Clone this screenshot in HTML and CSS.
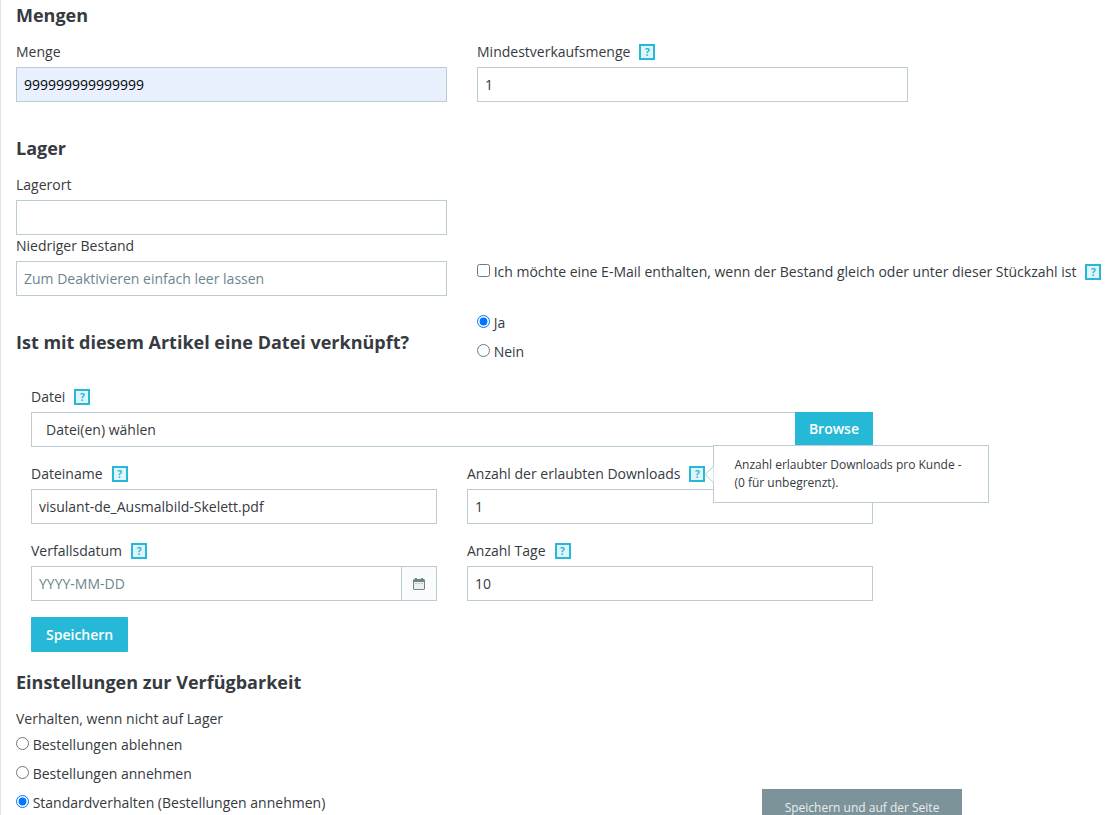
FILE: index.html
```html
<!DOCTYPE html>
<html lang="de">
<head>
  <meta charset="UTF-8" />
  <meta name="viewport" content="width=device-width, initial-scale=1" />
  <title>Mengen</title>
  <link rel="stylesheet" href="styles.css">
</head>
<body>
  <form class="quantities">

    <section class="block">
      <h2>Mengen</h2>
      <div class="row">
        <div class="field">
          <div class="field-head"><label for="qty">Menge</label></div>
          <input class="control autofilled" type="text" id="qty" value="999999999999999">
        </div>
        <div class="field">
          <div class="field-head">
            <label for="minQty">Mindestverkaufsmenge</label>
            <button type="button" class="help" aria-label="Hilfe">?</button>
          </div>
          <input class="control" type="text" id="minQty" value="1">
        </div>
      </div>
    </section>

    <section class="block stock">
      <h2>Lager</h2>
      <div class="row">
        <div class="field">
          <div class="field-head"><label for="location">Lagerort</label></div>
          <input class="control" type="text" id="location">
        </div>
      </div>
      <div class="row">
        <div class="field">
          <div class="field-head"><label for="lowStock">Niedriger Bestand</label></div>
          <input class="control" type="text" id="lowStock" placeholder="Zum Deaktivieren einfach leer lassen">
        </div>
        <div class="alert-choice">
          <label class="choice"><input type="checkbox"> Ich möchte eine E-Mail enthalten, wenn der Bestand gleich oder unter dieser Stückzahl ist</label>
          <button type="button" class="help" aria-label="Hilfe">?</button>
        </div>
      </div>
    </section>

    <section class="block files">
      <div class="row file-question">
        <h2>Ist mit diesem Artikel eine Datei verknüpft?</h2>
        <div class="choices">
          <label class="choice"><input type="radio" name="virtual" checked> Ja</label>
          <label class="choice"><input type="radio" name="virtual"> Nein</label>
        </div>
      </div>

      <div class="file-form">
        <div class="field">
          <div class="field-head">
            <label for="file">Datei</label>
            <button type="button" class="help" aria-label="Hilfe">?</button>
          </div>
          <div class="file-picker">
            <input class="file-input" type="file" id="file">
            <label class="file-label" for="file">
              <span class="file-name">Datei(en) wählen</span>
              <span class="file-browse">Browse</span>
            </label>
          </div>
        </div>

        <div class="row">
          <div class="field">
            <div class="field-head">
              <label for="fileName">Dateiname</label>
              <button type="button" class="help" aria-label="Hilfe">?</button>
            </div>
            <input class="control" type="text" id="fileName" value="visulant-de_Ausmalbild-Skelett.pdf">
          </div>
          <div class="field">
            <div class="field-head">
              <label for="downloads">Anzahl der erlaubten Downloads</label>
              <div class="help-wrap">
                <button type="button" class="help" aria-label="Hilfe" aria-describedby="downloadsTip">?</button>
                <div class="tip" id="downloadsTip" role="tooltip">Anzahl erlaubter Downloads pro Kunde - (0 für unbegrenzt).</div>
              </div>
            </div>
            <input class="control" type="text" id="downloads" value="1">
          </div>
        </div>

        <div class="row">
          <div class="field">
            <div class="field-head">
              <label for="expires">Verfallsdatum</label>
              <button type="button" class="help" aria-label="Hilfe">?</button>
            </div>
            <div class="date-group">
              <input class="control" type="text" id="expires" placeholder="YYYY-MM-DD">
              <button type="button" class="date-button" aria-label="Datum wählen">
                <svg width="12" height="12" viewBox="0 0 12 12">
                  <path fill="#6c868e" d="M2 0h2v1h4V0h2v1h1l1 1v9l-1 1H1l-1-1V2l1-1h1z"/>
                  <path fill="#eef0ef" d="M1 4h10v7H1z"/>
                  <path fill="#b9c3c4" d="M2 5h2v1H2zM5 5h2v1H5zM8 5h2v1H8z"/>
                </svg>
              </button>
            </div>
          </div>
          <div class="field">
            <div class="field-head">
              <label for="days">Anzahl Tage</label>
              <button type="button" class="help" aria-label="Hilfe">?</button>
            </div>
            <input class="control" type="text" id="days" value="10">
          </div>
        </div>

        <button type="button" class="btn-primary">Speichern</button>
      </div>
    </section>

    <section class="block">
      <h2>Einstellungen zur Verfügbarkeit</h2>
      <div class="field-head">Verhalten, wenn nicht auf Lager</div>
      <div class="choices">
        <label class="choice"><input type="radio" name="outOfStock"> Bestellungen ablehnen</label>
        <label class="choice"><input type="radio" name="outOfStock"> Bestellungen annehmen</label>
        <div class="last-line">
          <label class="choice"><input type="radio" name="outOfStock" checked> Standardverhalten (Bestellungen annehmen)</label>
          <button type="button" class="btn-stay">Speichern und auf der Seite bleiben</button>
        </div>
      </div>
    </section>

  </form>
</body>
</html>
```

FILE: styles.css
```css
* {
  box-sizing: border-box;
}

html, body {
  margin: 0;
  height: 100%;
  overflow: hidden;
}

body {
  background: #fff;
  border-left: 1px solid #e3e3e3;
  color: #363a41;
  font-family: "Open Sans", sans-serif;
  font-size: 14px;
  line-height: 20px;
}

input, button {
  font: inherit;
}

.quantities {
  padding: 5px 15px;
}

h2 {
  margin: 0 0 16px;
  font-size: 18px;
  font-weight: 700;
  line-height: 20px;
}

.block {
  margin-bottom: 36px;
}

.block.stock {
  margin-bottom: 16px;
}

.block.files {
  margin-bottom: 20px;
}

.row {
  display: grid;
  grid-template-columns: minmax(0, 1fr) minmax(0, 1fr);
  column-gap: 30px;
  max-width: 892px;
}

.field {
  min-width: 0;
}

.field-head {
  display: flex;
  align-items: center;
  gap: 9px;
  margin-bottom: 5px;
  padding-top: 1px;
}

.control {
  display: block;
  width: 100%;
  height: 35px;
  padding: 0 7px;
  background: #fff;
  border: 1px solid #bbcdd2;
  border-radius: 0;
  color: #363a41;
}

.control::placeholder {
  color: #6c868e;
  opacity: 1;
}

.autofilled {
  background: #e8f0fe;
  color: #000;
}

.help {
  flex: none;
  display: block;
  width: 16px;
  height: 16px;
  padding: 0;
  background: #dff5fa;
  border: 2px solid #25b9d7;
  color: #25b9d7;
  font-size: 10px;
  font-weight: 700;
  line-height: 12px;
  text-align: center;
  cursor: pointer;
}

.help-wrap {
  position: relative;
}

.tip {
  position: absolute;
  z-index: 2;
  top: 50%;
  left: 24px;
  width: 276px;
  padding: 10px 20px;
  background: #fff;
  border: 1px solid #bbcdd2;
  font-size: 12px;
  line-height: 18px;
  transform: translateY(-50%);
}

.tip::before {
  content: "";
  position: absolute;
  top: 22px;
  left: -7px;
  width: 12px;
  height: 12px;
  background: #fff;
  border: 1px solid #bbcdd2;
  border-width: 0 0 1px 1px;
  transform: rotate(45deg);
  clip-path: polygon(0 0, 100% 100%, 0 100%);
}

.alert-choice {
  display: flex;
  align-items: center;
  gap: 9px;
  height: 20px;
  margin-top: 27px;
  white-space: nowrap;
}

.choice {
  display: block;
}

.choice input {
  width: 13px;
  height: 13px;
  margin: 0;
}

.choices {
  display: flex;
  flex-direction: column;
  gap: 9px;
  padding-top: 1px;
}

.file-question {
  align-items: center;
  margin-bottom: 24px;
}

.file-question h2 {
  margin: 0;
  padding-top: 10px;
}

.file-form {
  display: flex;
  flex-direction: column;
  gap: 16px;
  max-width: 872px;
  padding: 0 15px;
}

.file-picker {
  position: relative;
}

.file-input {
  position: absolute;
  width: 100%;
  height: 35px;
  opacity: 0;
}

.file-label {
  display: flex;
  height: 35px;
  border: 1px solid #bbcdd2;
  border-right: 0;
}

.file-name {
  flex: 1;
  padding: 7px 14px;
}

.file-browse {
  margin: -1px 0;
  padding: 7px 14px;
  background: #25b9d7;
  color: #fff;
  font-weight: 600;
}

.date-group {
  display: flex;
}

.date-button {
  flex: none;
  display: flex;
  align-items: center;
  justify-content: center;
  width: 35px;
  padding: 0;
  background: #fafbfc;
  border: 1px solid #bbcdd2;
  border-left: 0;
}

.btn-primary {
  align-self: flex-start;
  height: 35px;
  padding: 0 15px;
  background: #25b9d7;
  border: 0;
  border-radius: 1px;
  color: #fff;
  font-weight: 600;
}

.last-line {
  display: flex;
  align-items: flex-start;
  justify-content: space-between;
  padding-right: 134px;
}

.last-line .choice {
  flex: none;
}

.btn-stay {
  width: 200px;
  margin-top: -4px;
  padding: 10px 20px;
  background: #7c9399;
  border: 0;
  color: #e9eeef;
  font-size: 12px;
  line-height: 18px;
}
```
